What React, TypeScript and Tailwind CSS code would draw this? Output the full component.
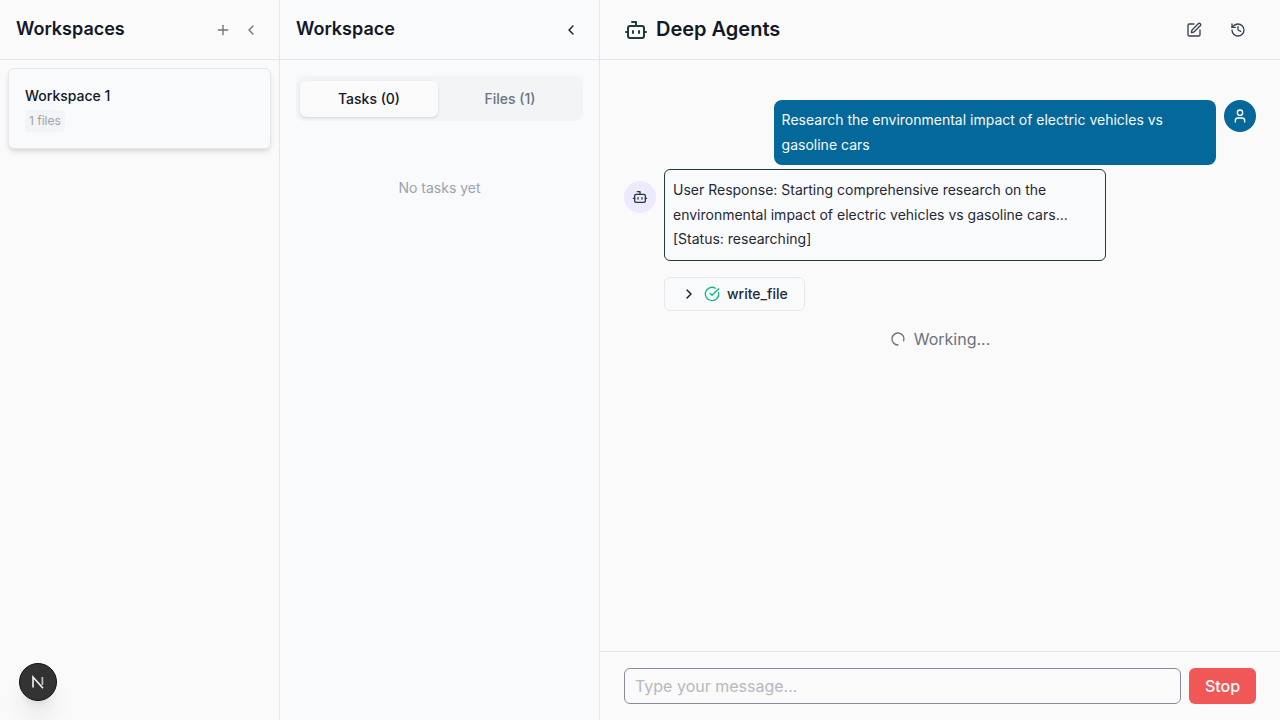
import { Bot, ChevronLeft, ChevronRight, CircleCheckBig, History, LoaderCircle, Plus, SquarePen, User } from "lucide-react";

function WorkspacesPanel() {
    return (
        <aside className="flex h-full w-[280px] shrink-0 flex-col border-r border-[#e5e7eb] bg-[#fafafa]">
            <header className="flex h-[60px] shrink-0 items-center justify-between border-b border-[#e5e7eb] pl-4 pr-5">
                <h2 className="pb-0.5 text-lg font-semibold text-[#111827]">Workspaces</h2>
                <div className="flex items-center gap-3">
                    <Plus className="h-4 w-4 text-[#6b7280]" />
                    <ChevronLeft className="h-4 w-4 text-[#6b7280]" />
                </div>
            </header>
            <div className="p-2">
                <div className="h-[81px] w-[263px] rounded-md border border-[#e5e7eb] bg-[#f9fafb] px-4 pt-[17px] shadow-md">
                    <div className="text-sm leading-5 font-medium text-[#111827]">Workspace 1</div>
                    <span className="mt-1 inline-block rounded bg-[#f3f4f6] px-1 text-xs leading-[22px] text-[#9ca3af]">1 files</span>
                </div>
            </div>
        </aside>
    );
}

function TasksPanel() {
    return (
        <aside className="flex h-full w-[320px] shrink-0 flex-col border-r border-[#e5e7eb] bg-[#f9fafb]">
            <header className="flex h-[60px] shrink-0 items-center justify-between border-b border-[#e5e7eb] pl-4 pr-5">
                <h2 className="pb-0.5 text-lg font-semibold text-[#111827]">Workspace</h2>
                <ChevronLeft className="h-4 w-4 text-[#111827]" />
            </header>
            <div className="px-4 pt-4">
                <div className="flex h-[45px] w-[287px] items-center gap-[3px] rounded-lg bg-[#f3f4f6] px-1">
                    <div className="flex h-9 w-[138px] items-center justify-center rounded-md bg-[#fafafa] text-sm font-medium text-[#111827] shadow-sm">
                        Tasks (0)
                    </div>
                    <div className="flex h-9 w-[138px] items-center justify-center text-sm font-medium text-[#6b7280]">
                        Files (1)
                    </div>
                </div>
                <p className="mt-[57px] text-center text-sm leading-5 text-[#9ca3af]">No tasks yet</p>
            </div>
        </aside>
    );
}

function ChatPanel() {
    return (
        <main className="flex h-full min-w-0 flex-1 flex-col bg-[#fafafa]">
            <header className="flex h-[60px] shrink-0 items-center justify-between border-b border-[#e5e7eb] pl-6 pr-[34px]">
                <div className="flex items-center gap-2">
                    <Bot className="h-6 w-6 text-[#1f3d3d]" />
                    <h1 className="pb-0.5 text-xl font-semibold text-[#111827]">Deep Agents</h1>
                </div>
                <div className="flex items-center gap-7">
                    <SquarePen className="h-4 w-4 text-[#374151]" />
                    <History className="h-4 w-4 text-[#374151]" />
                </div>
            </header>

            <div className="flex-1 overflow-hidden px-6 pt-10">
                <div className="flex justify-end gap-2">
                    <div className="w-[442.4px] rounded-lg bg-[#05689a] p-2 text-sm leading-[24.5px] text-[#f9fafb]">
                        Research the environmental impact of electric vehicles vs gasoline cars
                    </div>
                    <div className="flex h-8 w-8 items-center justify-center rounded-full bg-[#05689a]">
                        <User className="h-4 w-4 text-white" />
                    </div>
                </div>

                <div className="mt-1 flex items-start gap-2">
                    <div className="mt-3 flex h-8 w-8 shrink-0 items-center justify-center rounded-full bg-[#ede9fe]">
                        <Bot className="h-4 w-4 text-[#1f3d3d]" />
                    </div>
                    <div>
                        <div className="w-[442.4px] rounded-md border border-[#1f3d3d] bg-[#f9fafb] p-2 text-sm leading-[24.5px] text-[#1f2937]">
                            User Response: Starting comprehensive research on the environmental impact of electric vehicles vs gasoline cars... [Status: researching]
                        </div>
                        <div className="mt-4 flex h-[34px] w-[141px] items-center rounded-md border border-[#e5e7eb] bg-[#f9fafb] pl-4">
                            <ChevronRight className="h-4 w-4 text-[#111827]" />
                            <CircleCheckBig className="ml-[7px] h-4 w-4 text-[#10b981]" />
                            <span className="ml-[7px] text-sm font-medium text-[#1f2937]">write_file</span>
                        </div>
                    </div>
                </div>

                <div className="mt-4 flex items-center justify-center gap-2 text-base leading-6 text-[#6b7280]">
                    <LoaderCircle className="h-4 w-4 rotate-90 text-[#6b7280]" />
                    <span>Working...</span>
                </div>
            </div>

            <footer className="flex h-[69px] shrink-0 items-start gap-2 border-t border-[#e5e7eb] px-6 pt-4">
                <div className="flex h-9 flex-1 items-center rounded-md border border-[#8b8b9b] px-2.5 text-base text-[#b8b8bd]">
                    Type your message...
                </div>
                <button className="h-9 w-[67px] rounded-md bg-[#f25757] text-base font-medium text-white">Stop</button>
            </footer>
        </main>
    );
}

export default function App() {
    return (
        <div className="relative flex h-[720px] w-[1280px] overflow-hidden font-['Inter',sans-serif] antialiased">
            <WorkspacesPanel />
            <TasksPanel />
            <ChatPanel />
            {/* dev tools badge */}
            <div className="absolute bottom-[19px] left-[19px] flex h-[38px] w-[38px] items-center justify-center rounded-full border border-[#111111] bg-[#333333] shadow-xl">
                <svg viewBox="0 0 16 16" className="h-4 w-4" fill="none">
                    <path d="M3 13.5V3L13 14.2" stroke="#f5f5f5" strokeWidth="1.6" />
                    <path d="M12.4 3v8" stroke="#c8c8c8" strokeWidth="1.6" />
                </svg>
            </div>
        </div>
    );
}
